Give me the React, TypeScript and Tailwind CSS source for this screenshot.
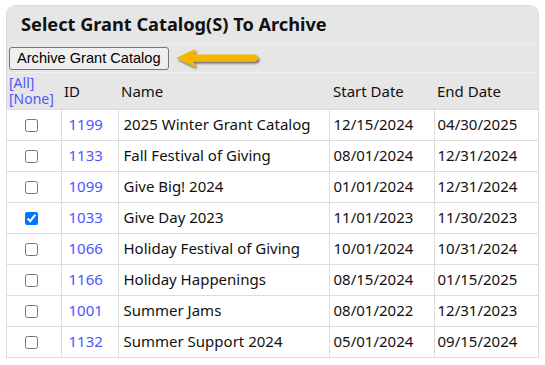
import React from 'react';

const rows = [
  { id: '1199', name: '2025 Winter Grant Catalog', start: '12/15/2024', end: '04/30/2025', checked: false },
  { id: '1133', name: 'Fall Festival of Giving', start: '08/01/2024', end: '12/31/2024', checked: false },
  { id: '1099', name: 'Give Big! 2024', start: '01/01/2024', end: '12/31/2024', checked: false },
  { id: '1033', name: 'Give Day 2023', start: '11/01/2023', end: '11/30/2023', checked: true },
  { id: '1066', name: 'Holiday Festival of Giving', start: '10/01/2024', end: '10/31/2024', checked: false },
  { id: '1166', name: 'Holiday Happenings', start: '08/15/2024', end: '01/15/2025', checked: false },
  { id: '1001', name: 'Summer Jams', start: '08/01/2022', end: '12/31/2023', checked: false },
  { id: '1132', name: 'Summer Support 2024', start: '05/01/2024', end: '09/15/2024', checked: false },
];

const Arrow = () => (
  <svg width="92" height="26" viewBox="0 0 92 26" className="ml-[6px] mt-[1px]">
    <defs>
      <filter id="sh" x="-20%" y="-50%" width="140%" height="200%">
        <feDropShadow dx="1.5" dy="2" stdDeviation="1.3" floodColor="#000" floodOpacity="0.55" />
      </filter>
    </defs>
    <path
      d="M2 12 L20 3.5 L17.5 9 L79 9 Q82.5 9 82.5 12 Q82.5 15 79 15 L17.5 15 L20 20.5 Z"
      fill="#f8b500"
      stroke="#f8b500"
      strokeWidth="1"
      strokeLinejoin="round"
      filter="url(#sh)"
    />
  </svg>
);

export default function App() {
  return (
    <div className="w-[545px] h-[365px] bg-white pt-[5px] pl-[6px] font-['Noto_Sans',sans-serif] text-[#111]">
      <div className="w-[533px] rounded-t-[9px] border border-b-0 border-[#dcdcdc] overflow-hidden">
        <div className="bg-[#e6e6e6] h-[39px] pl-[14px] pt-[5px] border-b border-[#efefef]">
          <h1 className="text-[18.2px] font-bold leading-[26px] text-[#111]">Select Grant Catalog(S) To Archive</h1>
        </div>
        <div className="bg-[#e6e6e6] h-[28px] flex items-center pl-[2px] border-b border-[#efefef]">
          <button className="h-[23px] px-[7px] border border-[#767676] rounded-[3px] bg-[#efefef] font-['Liberation_Sans',sans-serif] text-[14.6px] text-black leading-none">
            Archive Grant Catalog
          </button>
          <Arrow />
        </div>
        <table className="w-full border-collapse text-[15px]">
          <thead>
            <tr className="bg-[#e6e6e6] h-[36px] text-left">
              <th className="w-[54px] font-normal text-[#4d55ff] text-[14px] leading-[16px] pl-[2px] text-left">
                [All]<br />[None]
              </th>
              <th className="w-[57px] font-normal pl-[3px]">ID</th>
              <th className="w-[211px] font-normal pl-[3px]">Name</th>
              <th className="w-[105px] font-normal pl-[4px]">Start Date</th>
              <th className="font-normal pl-[3px]">End Date</th>
            </tr>
          </thead>
          <tbody>
            {rows.map((r) => (
              <tr key={r.id} className="h-[31px]">
                <td className="border border-l-0 border-[#dcdcdc] text-center pr-[5px]">
                  <input
                    type="checkbox"
                    defaultChecked={r.checked}
                    className="w-[13px] h-[13px] align-middle mt-[-2px] accent-[#0075ff]"
                  />
                </td>
                <td className="border border-[#dcdcdc] pl-[7px] text-[#4d55ff]">{r.id}</td>
                <td className="border border-[#dcdcdc] pl-[5px]">{r.name}</td>
                <td className="border border-[#dcdcdc] pl-[4px]">{r.start}</td>
                <td className="border border-r-0 border-[#dcdcdc] pl-[3px]">{r.end}</td>
              </tr>
            ))}
          </tbody>
        </table>
      </div>
    </div>
  );
}
